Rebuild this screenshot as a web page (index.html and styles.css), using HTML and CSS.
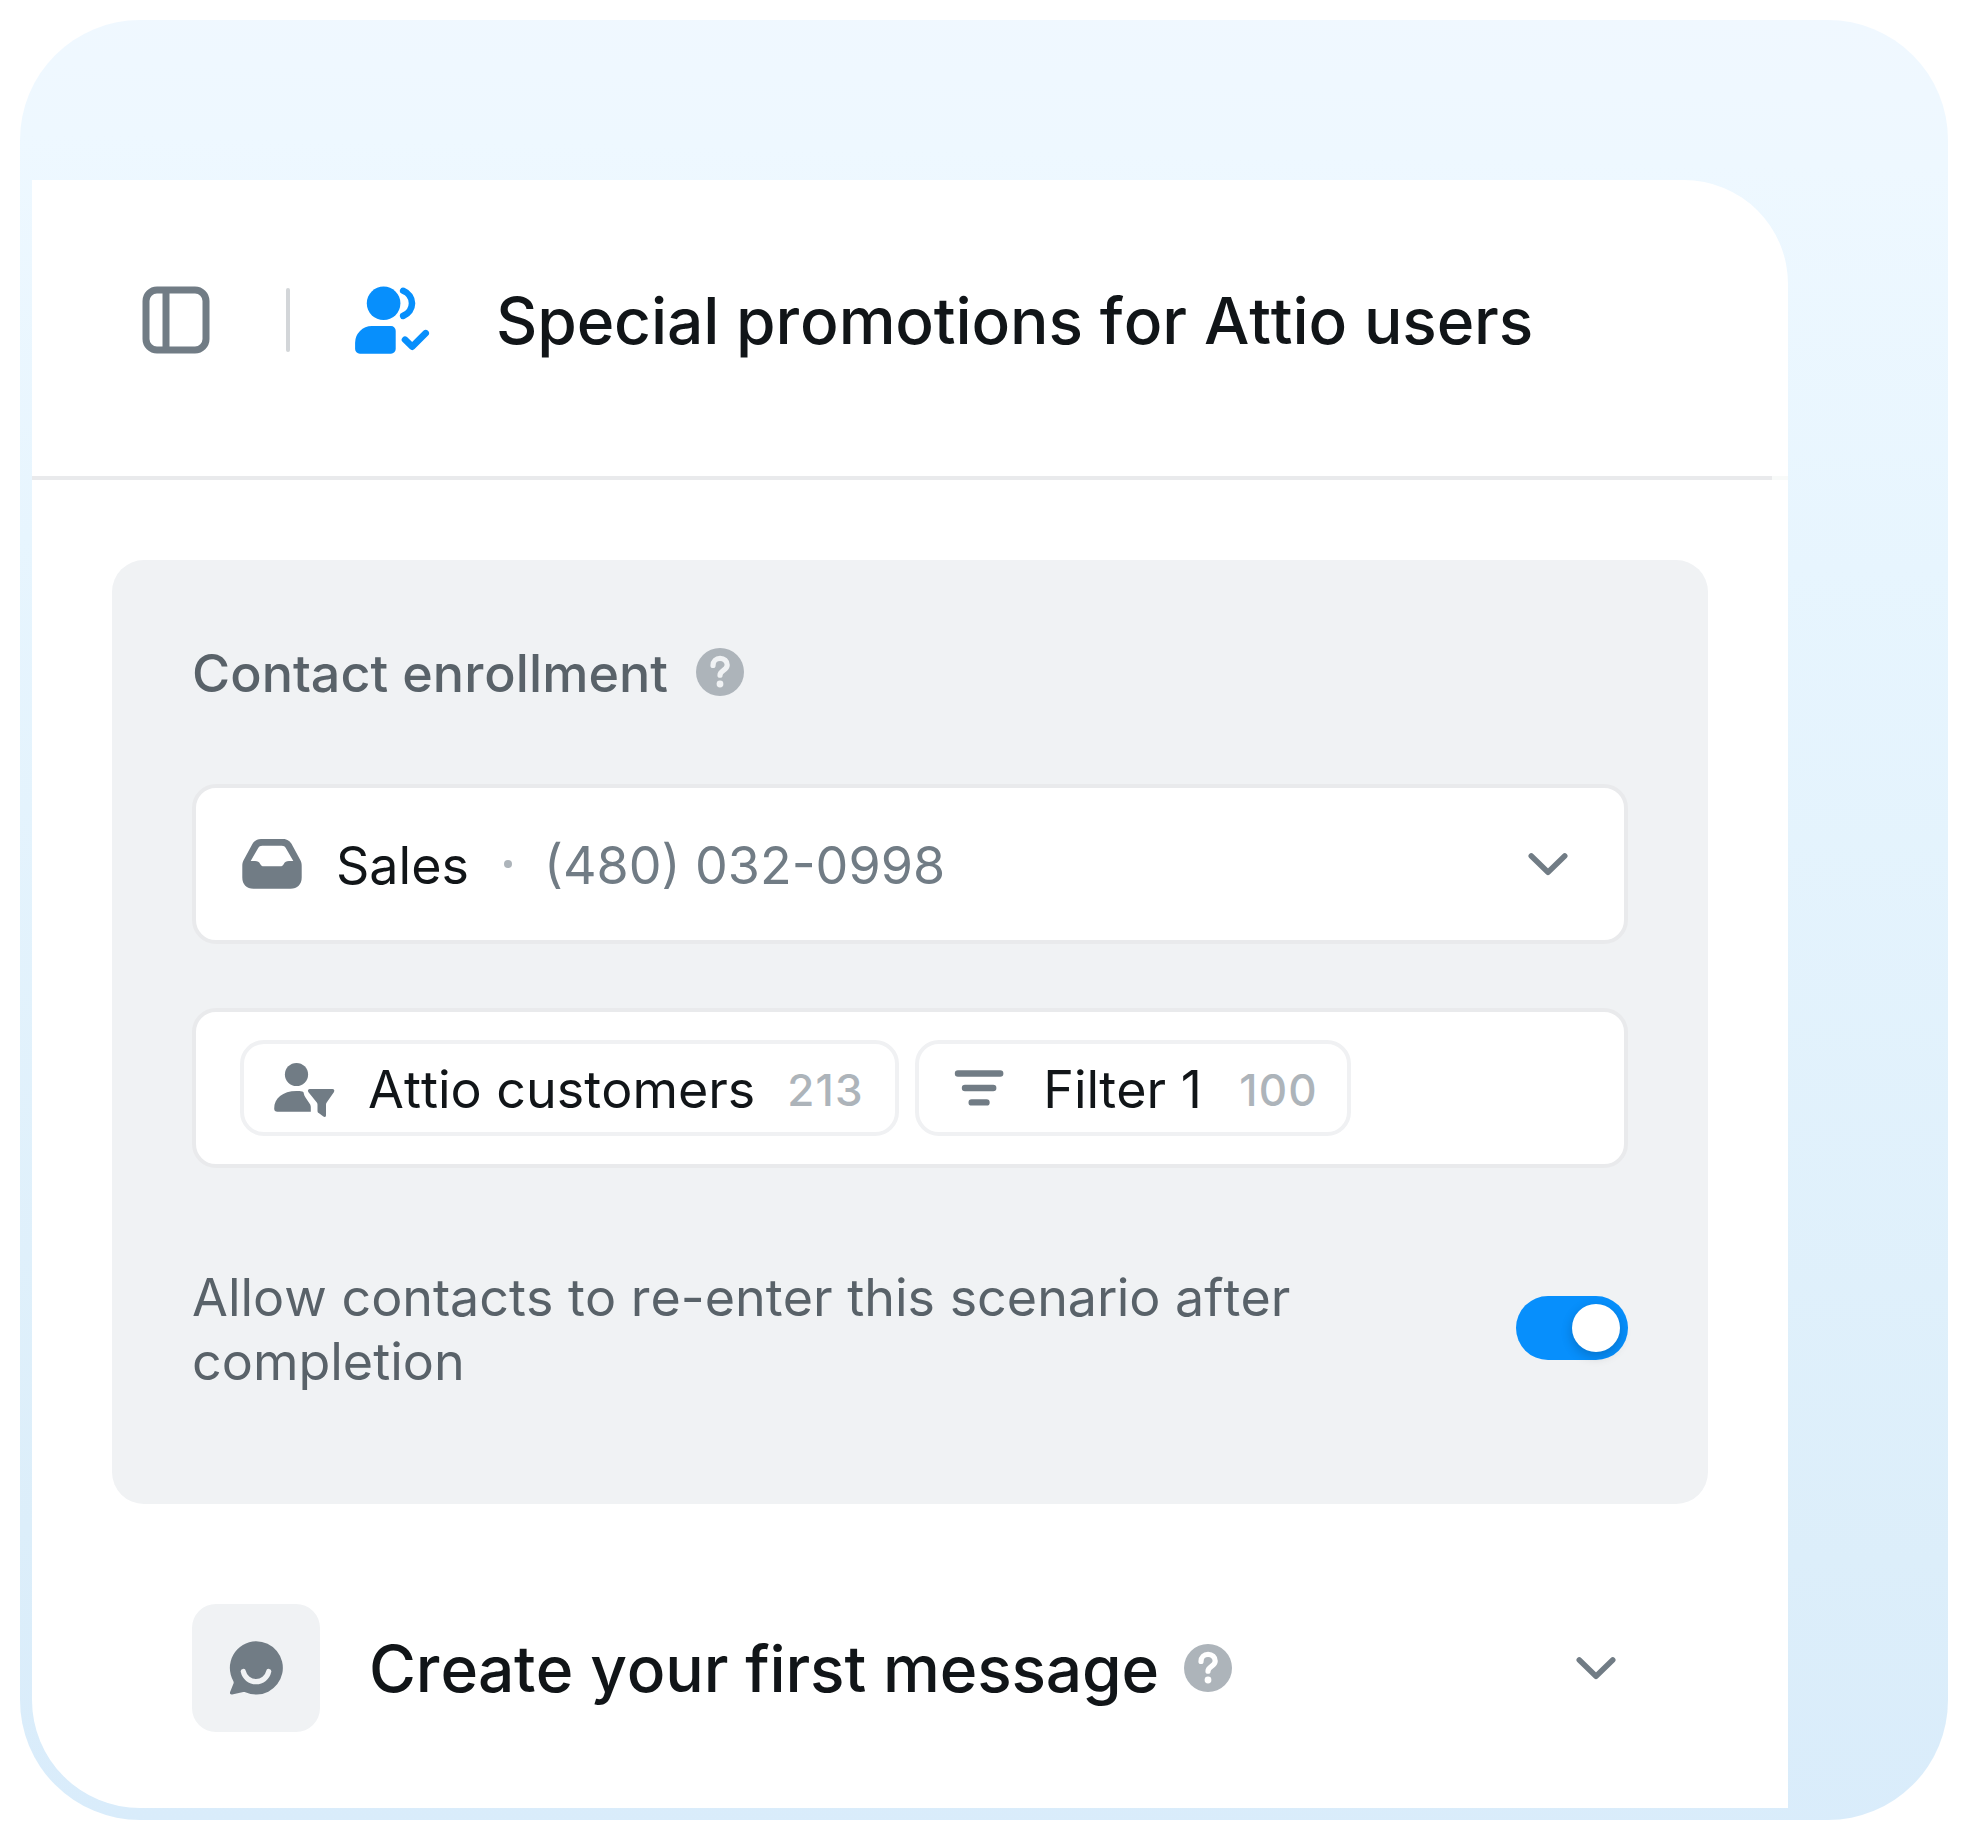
FILE: index.html
```html
<!DOCTYPE html>
<html lang="en">
<head>
  <meta charset="UTF-8" />
  <meta name="viewport" content="width=device-width, initial-scale=1.0"/>
  <title>Special promotions for Attio users</title>
  <link rel="stylesheet" href="styles.css">
</head>
<body>
  <div class="backdrop">
    <main class="card">
      <header class="header">
        <svg class="icon-panel" width="80" height="80" viewBox="0 0 80 80" fill="none" stroke="currentColor" stroke-width="7">
          <rect x="10" y="10" width="60" height="60" rx="11"/>
          <path d="M30 10v60"/>
        </svg>
        <span class="divider"></span>
        <svg class="icon-users" width="80" height="80" viewBox="0 0 80 80">
          <circle cx="33.6" cy="23.3" r="16.8" fill="currentColor"/>
          <path d="M21.8 46H41a4.7 4.7 0 0 1 4.7 4.7V69a4.7 4.7 0 0 1-4.7 4.7H9.8A4.7 4.7 0 0 1 5.1 69v-6.3A16.7 16.7 0 0 1 21.8 46z" fill="currentColor"/>
          <path d="M53.2 10.8C58.6 13 62 17.8 62 23.3S58.6 33.7 53.2 35.9M55 59.7l7.2 7L75.7 53.2" fill="none" stroke="currentColor" stroke-width="6.6" stroke-linecap="round" stroke-linejoin="round"/>
        </svg>
        <h1>Special promotions for Attio users</h1>
      </header>
      <div class="header-line"></div>

      <section class="enrollment">
        <div class="label-row">
          <h2>Contact enrollment</h2>
          <svg class="help" width="48" height="48" viewBox="-24 -24 48 48">
            <circle r="24" fill="#adb4ba"/>
            <path class="help-mark" d="M-7-6.6C-7-10.8-4-13.6.1-13.6S7.2-10.9 7.2-7C7.2-1.6 0-1.6 0 3.2"/>
            <circle class="help-dot" cy="12" r="3.4"/>
          </svg>
        </div>

        <div class="field select">
          <svg class="icon" width="64" height="64" viewBox="0 0 64 64">
            <path fill="currentColor" fill-rule="evenodd" d="M21 7h22c4.4 0 7.5 2.4 9.3 6.2l7.7 14.3c1.2 2.1 1.7 3.8 1.7 6.2V45.5c0 7-4.3 11.2-11.2 11.2H13.5C6.6 56.7 2.3 52.5 2.3 45.5V33.7c0-2.4.5-4.1 1.7-6.2l7.7-14.3C13.5 9.4 16.6 7 21 7zM22.2 13.7c-1.9 0-3.1.7-4 2.3L10.7 29H15c2.7 0 4 .9 5.2 2.9.9 1.6 1.7 2.4 3.6 2.4h16.4c1.9 0 2.7-.8 3.6-2.4 1.2-2 2.5-2.9 5.2-2.9h4.3L45.8 16c-.9-1.6-2.1-2.3-4-2.3z"/>
          </svg>
          <span class="inbox-name">Sales</span>
          <span class="dot"></span>
          <span class="phone">(480) 032-0998</span>
          <svg class="chevron" width="64" height="64" viewBox="0 0 64 64">
            <path d="M15.3 24 32 40.2 48.7 24"/>
          </svg>
        </div>

        <div class="field tags">
          <div class="chip">
            <svg class="icon" width="64" height="64" viewBox="0 0 64 64" fill="currentColor">
              <circle cx="24.5" cy="18.5" r="11.6"/>
              <path d="M24.5 35c2 0 4 .1 5.7.5 1 .2 1.5.8 1.6 2 .2 1.5.8 2.7 1.7 4l4.2 6.3c.8 1.2 1.1 2 1.1 3.4v4.5H5.5c-2.2 0-3.3-1.2-3.3-3.3C2.2 42.5 10.5 35 24.5 35z"/>
              <path d="M37.8 33h22.7c1.6 0 2.3 1.5 1.5 2.9L54.7 46.5c-.5.7-.7 1.3-.7 2.2v10.5c0 1.7-1.3 2.3-2.6 1.3l-4.7-3.4c-.8-.6-1.2-1.3-1.2-2.4v-6c0-.9-.2-1.5-.7-2.2L36.3 35.9c-.8-1.4-.1-2.9 1.5-2.9z"/>
            </svg>
            <span class="chip-name">Attio customers</span>
            <span class="count">213</span>
          </div>
          <div class="chip">
            <svg class="icon" width="64" height="64" viewBox="0 0 64 64" fill="none" stroke="currentColor" stroke-width="6.4" stroke-linecap="round">
              <path d="M11 17.5h42.2M18 32h28.2M24.7 46.4h14.8"/>
            </svg>
            <span class="chip-name">Filter 1</span>
            <span class="count">100</span>
          </div>
        </div>

        <div class="toggle-row">
          <p>Allow contacts to re-enter this scenario after completion</p>
          <span class="toggle"><span class="knob"></span></span>
        </div>
      </section>

      <section class="message">
        <div class="tile">
          <svg width="64" height="64" viewBox="0 0 64 64">
            <path fill="currentColor" d="M32 5.2a26.7 26.7 0 1 1-10.7 51.1c-.7-.3-1.3-.4-2-.3l-11.2 2.4c-1.6.3-2.6-.9-2-2.4l3.3-8.2c.4-1 .4-1.7 0-2.6A26.7 26.7 0 0 1 32 5.2z"/>
            <path d="M19.3 35.5a13 13 0 0 0 25.4 0" fill="none" stroke="#f0f2f4" stroke-width="5.2" stroke-linecap="round"/>
          </svg>
        </div>
        <h1>Create your first message</h1>
        <svg class="help on-white" width="48" height="48" viewBox="-24 -24 48 48">
          <circle r="24" fill="#adb4ba"/>
          <path class="help-mark" d="M-7-6.6C-7-10.8-4-13.6.1-13.6S7.2-10.9 7.2-7C7.2-1.6 0-1.6 0 3.2"/>
          <circle class="help-dot" cy="12" r="3.4"/>
        </svg>
        <svg class="chevron" width="64" height="64" viewBox="0 0 64 64">
          <path d="M15.3 24 32 40.2 48.7 24"/>
        </svg>
      </section>
    </main>
  </div>
</body>
</html>
```
FILE: styles.css
```css
* {
  box-sizing: border-box;
}
body {
  margin: 0;
  padding: 20px;
  font-family: Inter, sans-serif;
  font-kerning: none;
  background-color: #ffffff;
  color: #111518;
}
h1, h2, p {
  margin: 0;
}
svg {
  display: block;
  flex-shrink: 0;
}
.backdrop {
  width: 1928px;
  height: 1800px;
  padding: 160px 160px 12px 12px;
  border-radius: 120px;
  background: linear-gradient(181deg, #f0f8ff 0%, #eef8ff 8%, #e7f5fe 30%, #dceefa 84%, #d9ecfb 100%);
}
.card {
  height: 1628px;
  background-color: #ffffff;
  border-radius: 0 104px 0 108px;
}
.header {
  display: flex;
  align-items: center;
  height: 296px;
  padding: 0 104px;
  padding-bottom: 16px;
}
.icon-panel {
  color: #717c85;
}
.divider {
  width: 4px;
  height: 64px;
  margin: 0 60px 0 70px;
  border-radius: 2px;
  background-color: #d3d6d9;
}
.icon-users {
  color: #078ffc;
  margin-right: 66px;
}
h1 {
  padding-top: 2px;
  font-size: 64px;
  font-weight: 500;
  line-height: 80px;
  letter-spacing: -0.13px;
  white-space: nowrap;
}
.header-line {
  height: 4px;
  background: linear-gradient(to right, #e9eaec 1740px, #f8faf9 1740px);
}
.enrollment {
  margin: 80px 80px 0;
  height: 944px;
  padding: 80px;
  border-radius: 32px;
  background-color: #f0f2f4;
}
.label-row {
  display: flex;
  align-items: center;
  gap: 28px;
  height: 64px;
  color: #596269;
}
h2 {
  padding-top: 3px;
  font-size: 52px;
  font-weight: 500;
  line-height: 64px;
  letter-spacing: 0.07px;
}
.help-mark {
  fill: none;
  stroke: #f0f2f4;
  stroke-width: 5.2px;
  stroke-linecap: round;
}
.help-dot {
  fill: #f0f2f4;
}
.on-white .help-mark {
  stroke: #ffffff;
}
.on-white .help-dot {
  fill: #ffffff;
}
.field {
  display: flex;
  align-items: center;
  height: 160px;
  padding: 0 44px;
  border: 4px solid #e9eaec;
  border-radius: 24px;
  background-color: #ffffff;
  font-size: 52px;
  line-height: 64px;
  white-space: nowrap;
}
.icon {
  color: #717c85;
}
.select {
  margin-top: 80px;
}
.inbox-name, .phone, .chip-name, .count {
  padding-top: 3px;
}
.inbox-name {
  margin-left: 32px;
}
.dot {
  width: 8px;
  height: 8px;
  margin: 0 32px 0 35px;
  border-radius: 50%;
  background-color: #adb4ba;
}
.phone {
  color: #717c85;
}
.chevron {
  margin-left: auto;
}
.chevron path {
  fill: none;
  stroke: #717c85;
  stroke-width: 5.6px;
  stroke-linecap: round;
  stroke-linejoin: round;
}
.tags {
  margin-top: 64px;
  gap: 16px;
}
.chip {
  display: flex;
  align-items: center;
  gap: 32px;
  height: 96px;
  padding: 0 32px 0 28px;
  border: 4px solid #f0f1f3;
  border-radius: 24px;
}
.chip-name {
  min-width: 164px;
}
.count {
  width: 76px;
  font-size: 44px;
  font-weight: 500;
  letter-spacing: 1.2px;
  color: #adb4ba;
}
.toggle-row {
  display: flex;
  align-items: center;
  justify-content: space-between;
  margin-top: 96px;
}
p {
  width: 1180px;
  padding-top: 2px;
  margin-bottom: -2px;
  font-size: 52px;
  line-height: 64px;
  color: #596269;
}
.toggle {
  display: flex;
  align-items: center;
  justify-content: flex-end;
  width: 112px;
  height: 64px;
  padding: 8px;
  border-radius: 32px;
  background-color: #078ffc;
}
.knob {
  width: 48px;
  height: 48px;
  border-radius: 50%;
  background-color: #ffffff;
  box-shadow: 0 4px 12px rgba(0, 0, 0, 0.2);
}
.message {
  display: flex;
  align-items: center;
  height: 128px;
  margin-top: 100px;
  padding: 0 160px;
}
.tile {
  display: flex;
  align-items: center;
  justify-content: center;
  width: 128px;
  height: 128px;
  margin-right: 49px;
  border-radius: 24px;
  background-color: #f0f2f4;
  color: #717c85;
}
.message .help {
  margin-left: 25px;
}
```
